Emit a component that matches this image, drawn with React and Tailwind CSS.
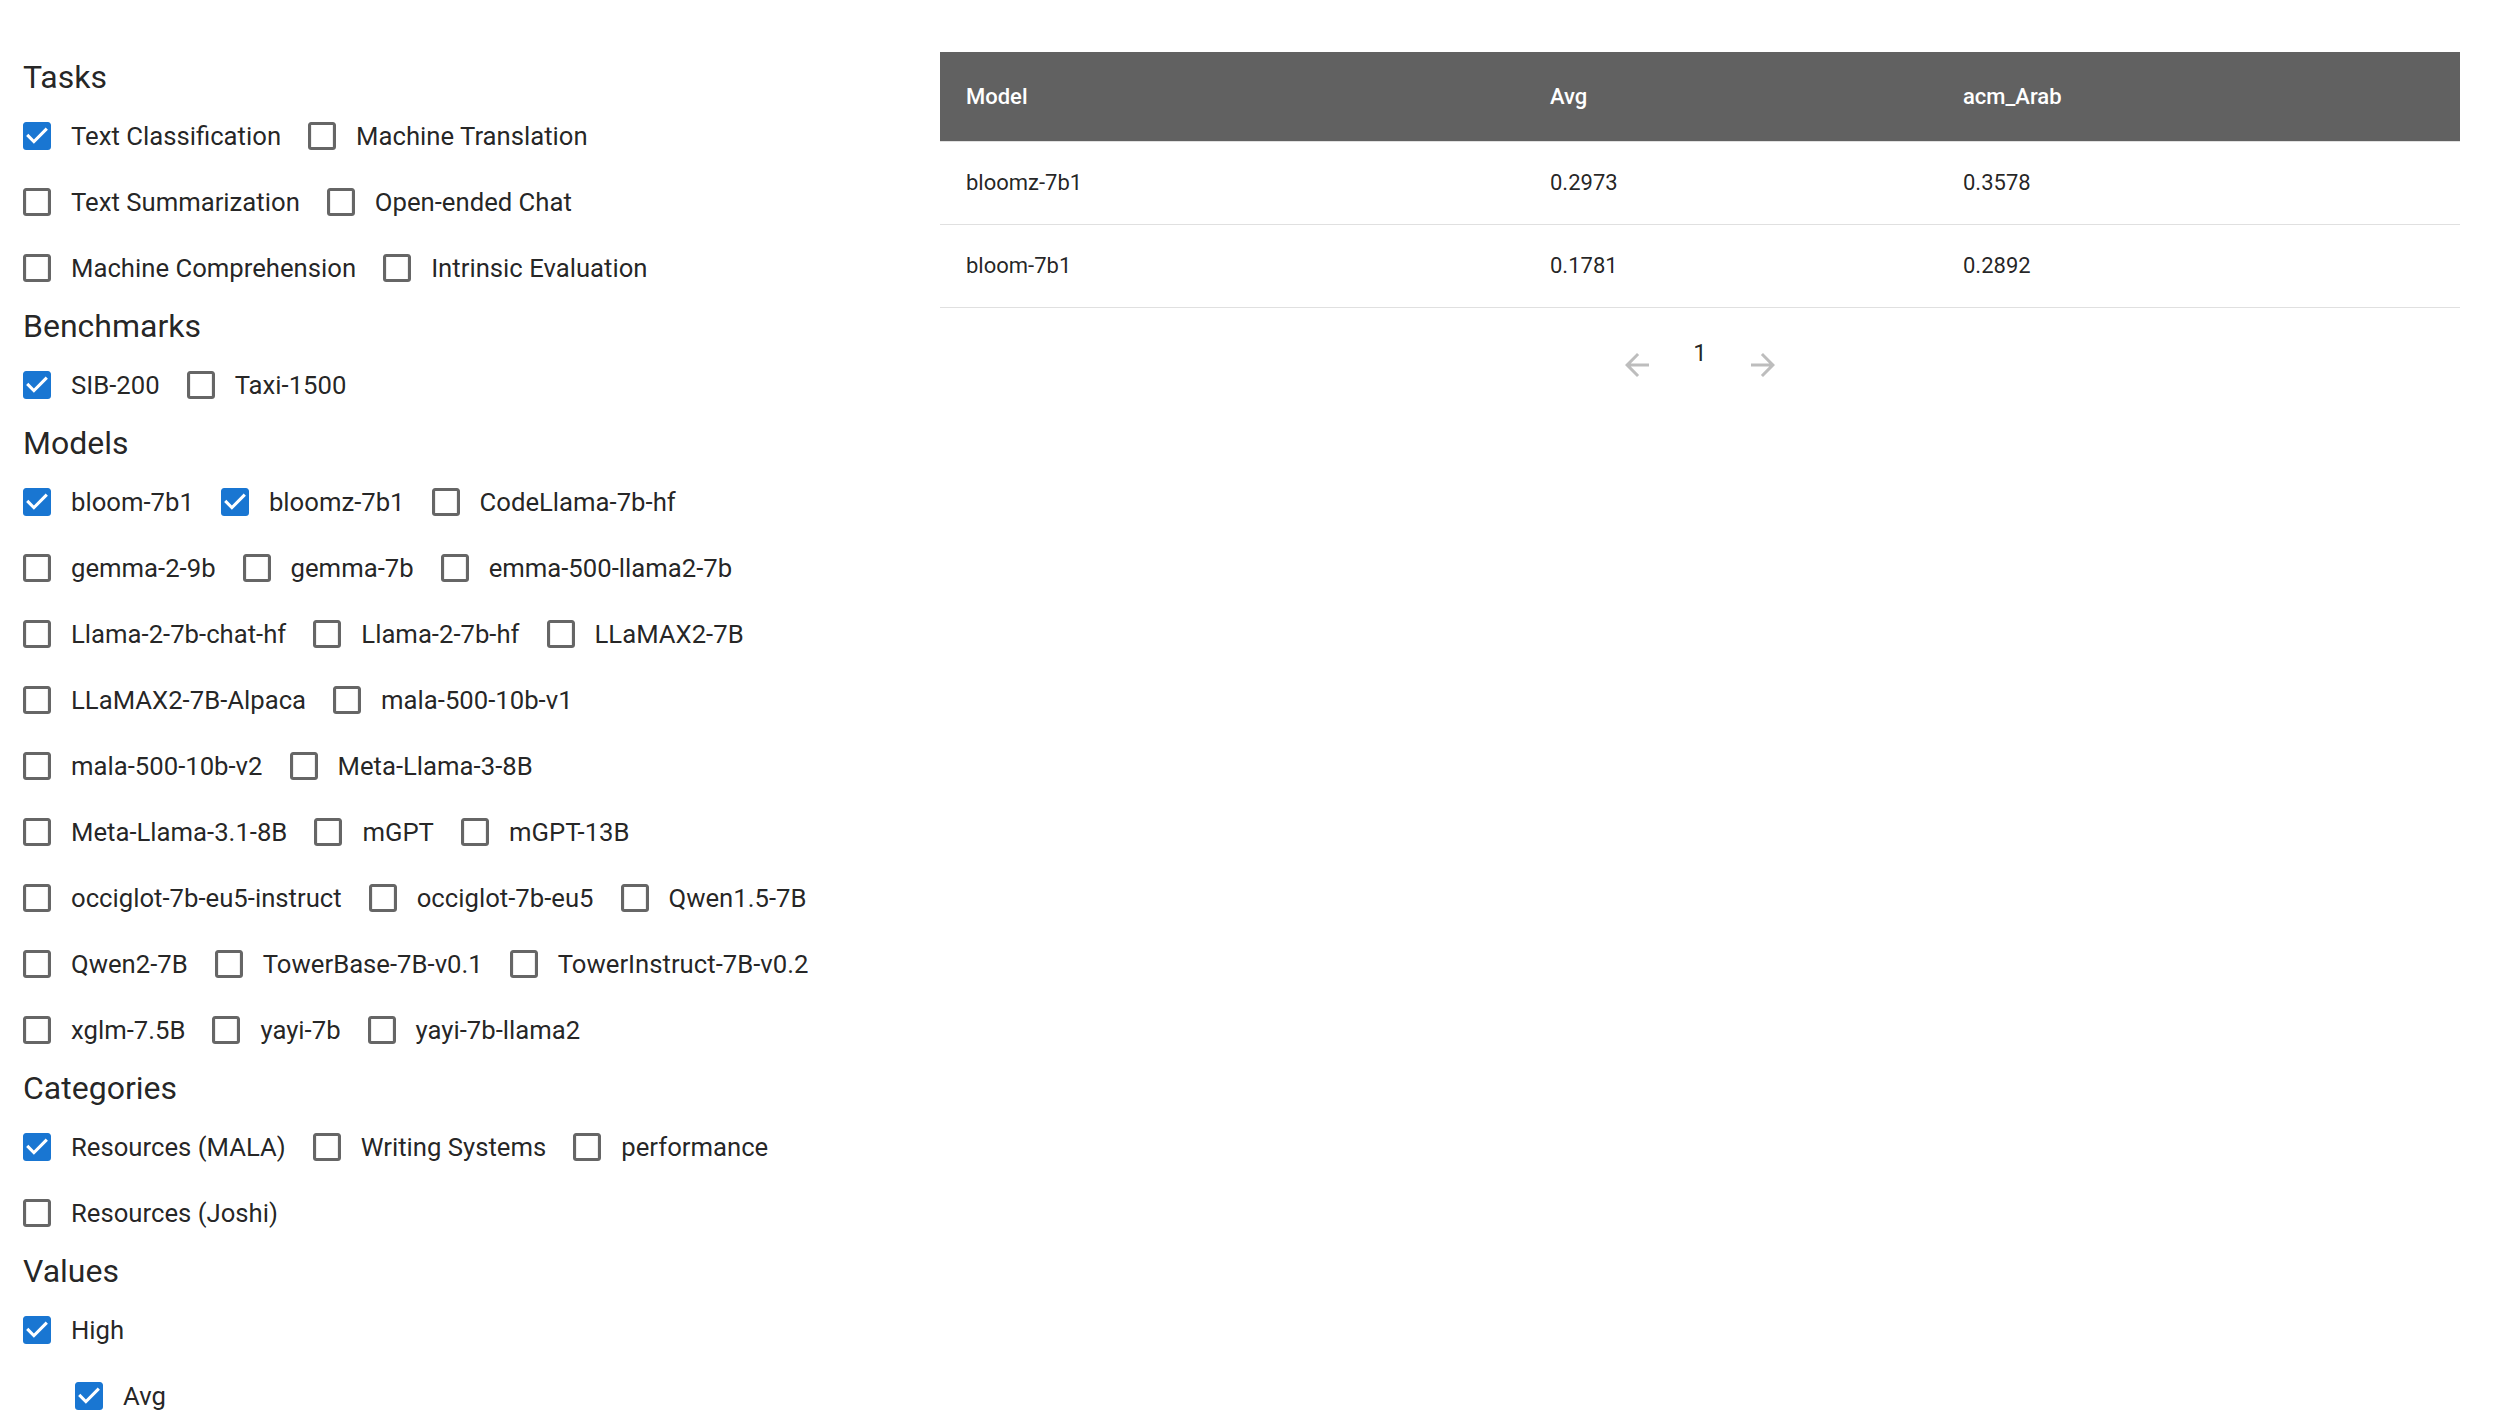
import React from 'react';

const BOX_BLANK =
    'M19 5v14H5V5h14m0-2H5c-1.1 0-2 .9-2 2v14c0 1.1.9 2 2 2h14c1.1 0 2-.9 2-2V5c0-1.1-.9-2-2-2z';
const BOX_CHECKED =
    'M19 3H5c-1.11 0-2 .9-2 2v14c0 1.1.89 2 2 2h14c1.11 0 2-.9 2-2V5c0-1.1-.89-2-2-2zm-9 14l-5-5 1.41-1.41L10 14.17l7.59-7.59L19 8l-9 9z';

const sections = [
    {
        title: 'Tasks',
        options: [
            ['Text Classification', true],
            ['Machine Translation', false],
            ['Text Summarization', false],
            ['Open-ended Chat', false],
            ['Machine Comprehension', false],
            ['Intrinsic Evaluation', false],
        ],
    },
    {
        title: 'Benchmarks',
        options: [
            ['SIB-200', true],
            ['Taxi-1500', false],
        ],
    },
    {
        title: 'Models',
        options: [
            ['bloom-7b1', true],
            ['bloomz-7b1', true],
            ['CodeLlama-7b-hf', false],
            ['gemma-2-9b', false],
            ['gemma-7b', false],
            ['emma-500-llama2-7b', false],
            ['Llama-2-7b-chat-hf', false],
            ['Llama-2-7b-hf', false],
            ['LLaMAX2-7B', false],
            ['LLaMAX2-7B-Alpaca', false],
            ['mala-500-10b-v1', false],
            ['mala-500-10b-v2', false],
            ['Meta-Llama-3-8B', false],
            ['Meta-Llama-3.1-8B', false],
            ['mGPT', false],
            ['mGPT-13B', false],
            ['occiglot-7b-eu5-instruct', false],
            ['occiglot-7b-eu5', false],
            ['Qwen1.5-7B', false],
            ['Qwen2-7B', false],
            ['TowerBase-7B-v0.1', false],
            ['TowerInstruct-7B-v0.2', false],
            ['xglm-7.5B', false],
            ['yayi-7b', false],
            ['yayi-7b-llama2', false],
        ],
    },
    {
        title: 'Categories',
        options: [
            ['Resources (MALA)', true],
            ['Writing Systems', false],
            ['performance', false],
            ['Resources (Joshi)', false],
        ],
    },
];

const rows = [
    { model: 'bloomz-7b1', avg: '0.2973', acm: '0.3578' },
    { model: 'bloom-7b1', avg: '0.1781', acm: '0.2892' },
];

const CheckIcon = ({ checked }) => (
    <svg
        viewBox="3 3 18 18"
        className="w-[28px] h-[28px] shrink-0"
        fill={checked ? '#1976d2' : '#666666'}
    >
        <path d={checked ? BOX_CHECKED : BOX_BLANK} />
    </svg>
);

const Option = ({ label, checked }) => (
    <label className="flex items-center h-[66px] cursor-pointer">
        <CheckIcon checked={checked} />
        <span className="ml-[20px] text-[25.7px] text-[rgba(0,0,0,0.87)] whitespace-nowrap">{label}</span>
    </label>
);

const Heading = ({ children }) => (
    <h6 className="text-[32px] leading-[51px] text-[rgba(0,0,0,0.87)]">{children}</h6>
);

const Arrow = ({ dir }) => (
    <svg viewBox="0 0 24 24" className="w-[36px] h-[36px] mt-[12px]" fill="#bdbdbd">
        {dir === 'left' ? (
            <path d="M20 11H7.83l5.59-5.59L12 4l-8 8 8 8 1.41-1.41L7.83 13H20v-2z" />
        ) : (
            <path d="M12 4l-1.41 1.41L16.17 11H4v2h12.17l-5.58 5.59L12 20l8-8z" />
        )}
    </svg>
);

const App = () => {
    return (
        <div className="h-screen overflow-hidden bg-white font-['Roboto',sans-serif] flex pt-[52px]">
            <div className="w-[940px] shrink-0 pl-[23px]">
                {sections.map((section) => (
                    <div key={section.title}>
                        <Heading>{section.title}</Heading>
                        <div className="flex flex-wrap gap-x-[27px] w-[794px]">
                            {section.options.map(([label, checked]) => (
                                <Option key={label} label={label} checked={checked} />
                            ))}
                        </div>
                    </div>
                ))}
                <Heading>Values</Heading>
                <Option label="High" checked />
                <div className="pl-[52px]">
                    <Option label="Avg" checked />
                </div>
            </div>

            <div className="w-[1520px] shrink-0">
                <table className="w-full border-collapse text-left">
                    <thead>
                        <tr className="bg-[#616161] h-[89px] border-b border-[#e0e0e0]">
                            <th className="w-[584px] pl-[26px] text-[22px] font-medium text-white">Model</th>
                            <th className="w-[413px] pl-[26px] text-[22px] font-medium text-white">Avg</th>
                            <th className="pl-[26px] text-[22px] font-medium text-white">acm_Arab</th>
                        </tr>
                    </thead>
                    <tbody>
                        {rows.map((row) => (
                            <tr key={row.model} className="h-[83px] border-b border-[#e0e0e0]">
                                <td className="pl-[26px] text-[22px] text-[rgba(0,0,0,0.87)]">{row.model}</td>
                                <td className="pl-[26px] text-[22px] text-[rgba(0,0,0,0.87)]">{row.avg}</td>
                                <td className="pl-[26px] text-[22px] text-[rgba(0,0,0,0.87)]">{row.acm}</td>
                            </tr>
                        ))}
                    </tbody>
                </table>

                <div className="flex justify-center items-start mt-[27px]">
                    <Arrow dir="left" />
                    <span className="ml-[38px] mr-[38px] text-[24px] leading-[36px] text-[rgba(0,0,0,0.87)]">1</span>
                    <Arrow dir="right" />
                </div>
            </div>
        </div>
    );
};

export default App;
